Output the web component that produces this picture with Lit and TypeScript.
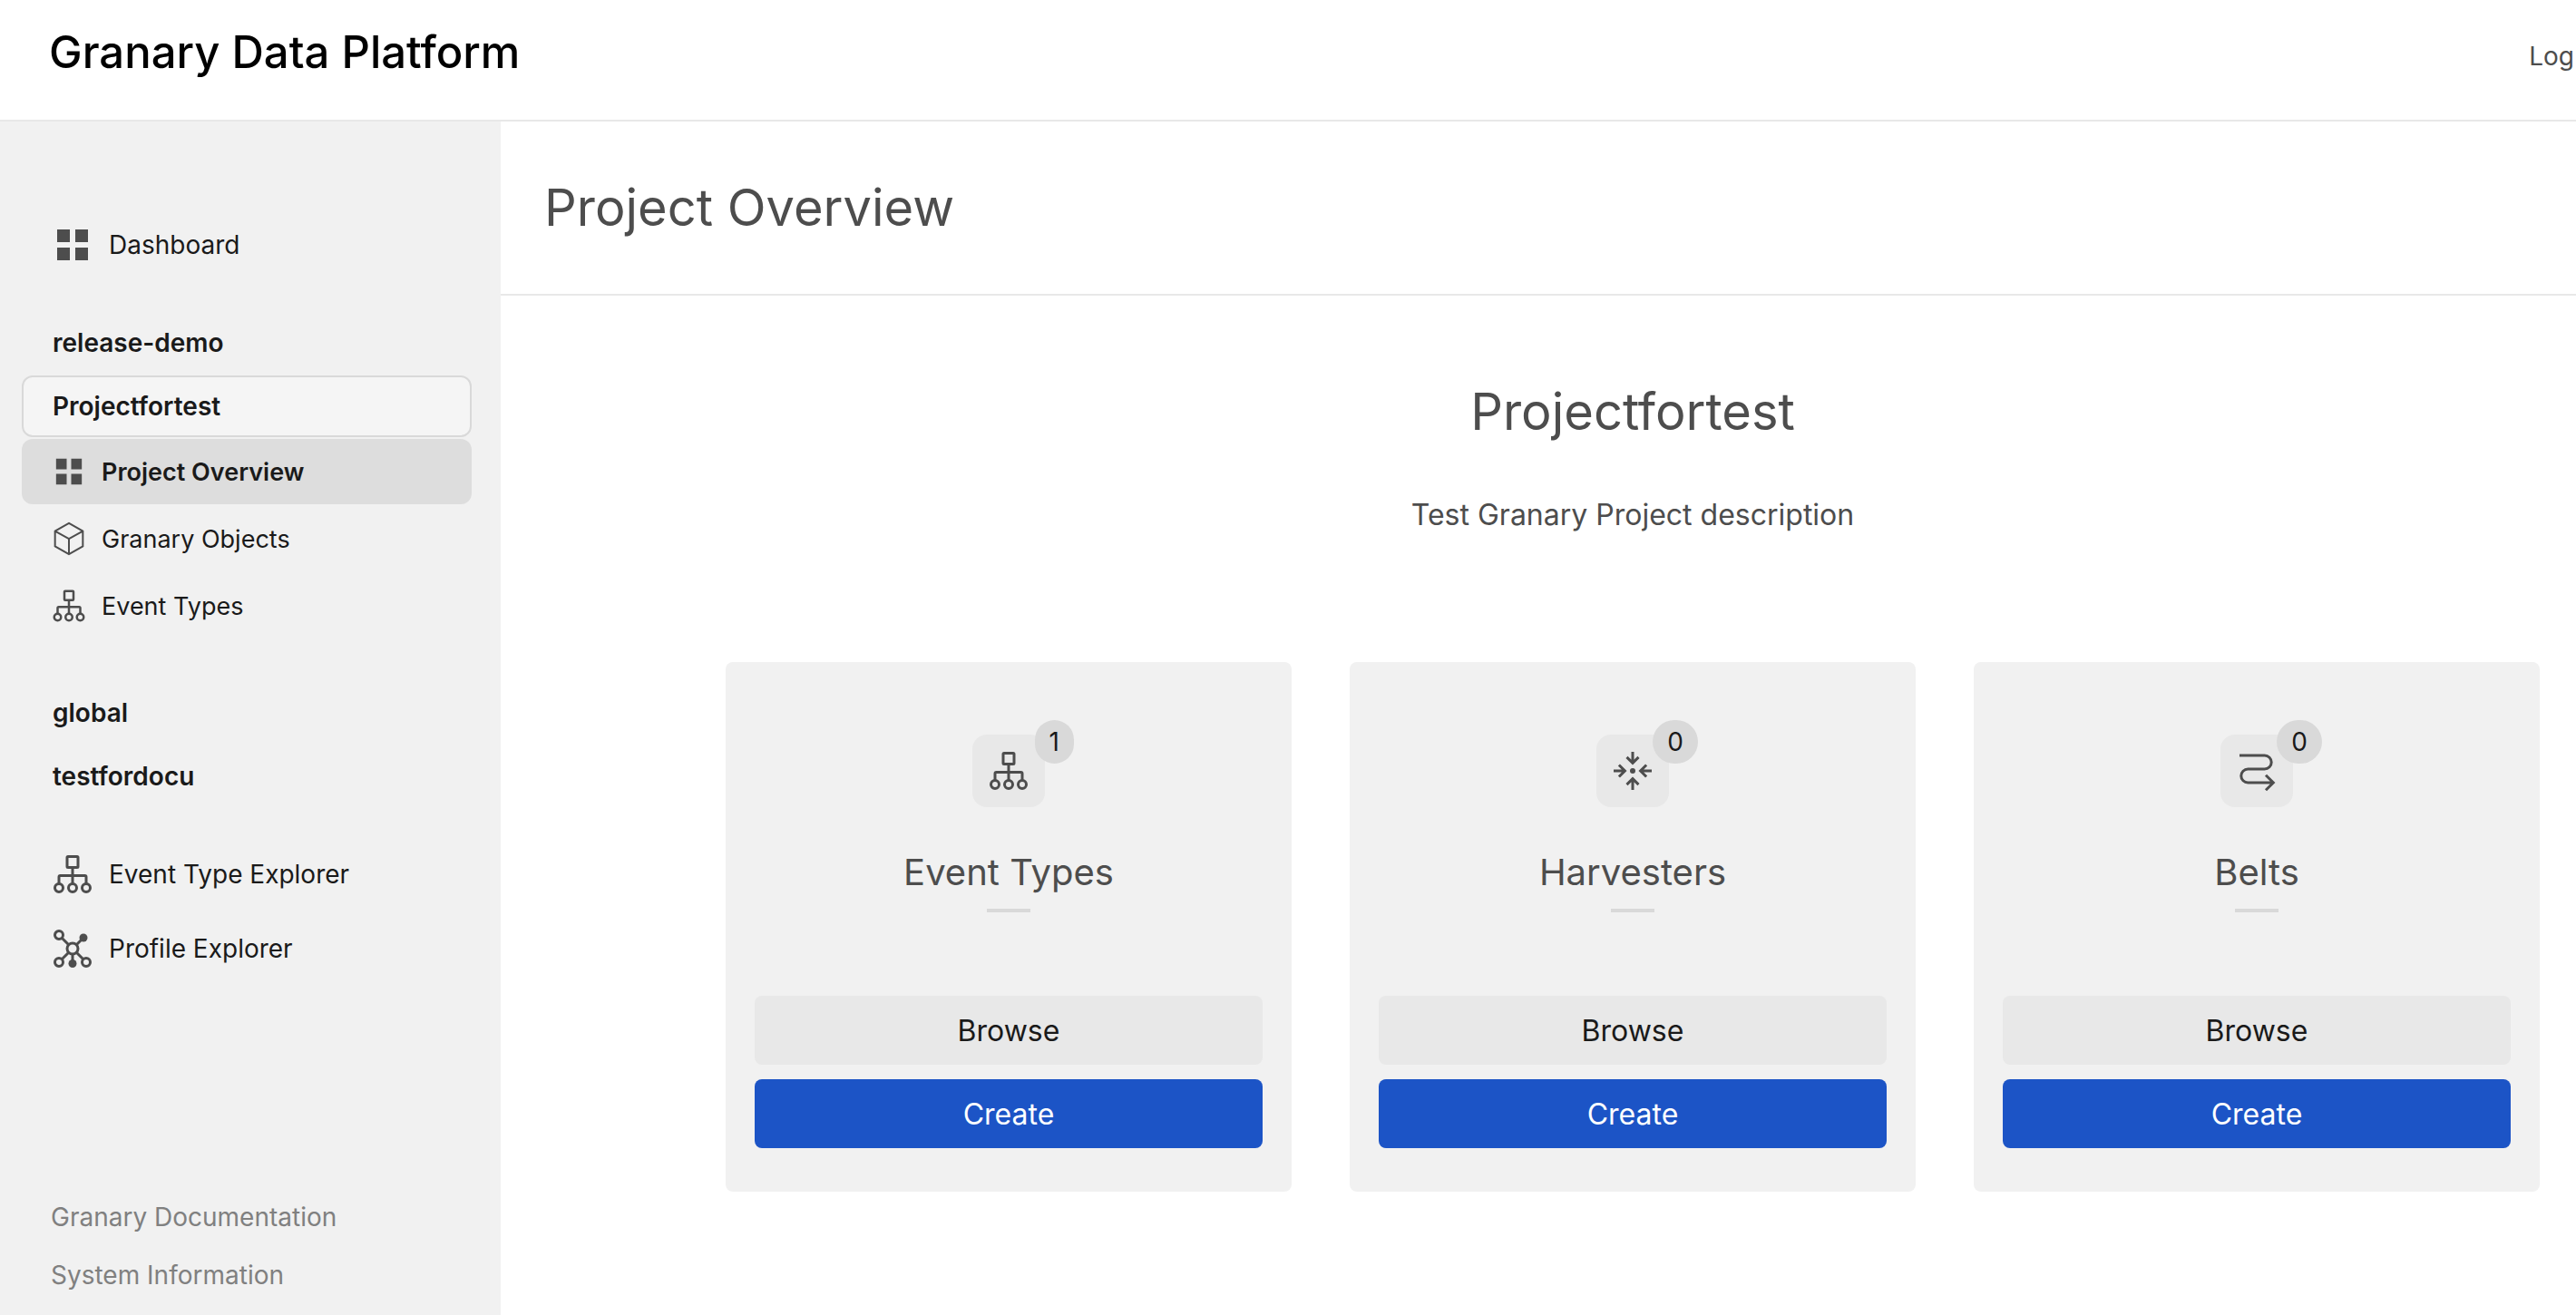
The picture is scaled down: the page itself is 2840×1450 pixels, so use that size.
import { LitElement, html, css, svg } from "lit";
import { customElement, property } from "lit/decorators.js";
import { classMap } from "lit/directives/class-map.js";

type IconName = "grid" | "cube" | "tree" | "graph" | "converge" | "belt";

const shapes = {
  grid: svg`<path class="solid" d="M7 7h14v14H7zM27 7h14v14H27zM7 27h14v14H7zM27 27h14v14H27z"/>`,
  cube: svg`<path class="thin" d="M24 3.4 42.4 14v20L24 44.6 5.6 34V14zM5.6 14 24 24.2 42.4 14M24 24.2V44.6"/>`,
  tree: svg`
    <rect x="18" y="4.5" width="12" height="12" rx="1"/>
    <path d="M24 16.5v18M9 34.5V27a1.5 1.5 0 0 1 1.5-1.5h27A1.5 1.5 0 0 1 39 27v7.5"/>
    <circle cx="9" cy="39" r="4.5"/><circle cx="24" cy="39" r="4.5"/><circle cx="39" cy="39" r="4.5"/>`,
  graph: svg`
    <circle cx="24" cy="24" r="6"/>
    <circle cx="9" cy="9" r="4.5"/><circle cx="9" cy="39" r="4.5"/><circle cx="39" cy="39" r="4.5"/>
    <path d="M12.2 12.2l7.5 7.5M28.3 19.7 36 12M19.7 28.3l-7.5 7.5M28.3 28.3l7.5 7.5M24 30v10"/>
    <circle class="solid" cx="36" cy="12" r="4.5"/><circle class="solid" cx="24" cy="40.5" r="4.5"/>`,
  converge: svg`
    <path d="M24 3v12.4M17.5 8.900l6.500 6.500 6.500-6.500"/>
    <path d="M24 45V32.6M17.5 39.1l6.500-6.500 6.500 6.500"/>
    <path d="M3 24h12.4M8.900 17.5l6.500 6.500-6.500 6.500"/>
    <path d="M45 24H32.6M39.1 17.5l-6.500 6.500 6.500 6.500"/>
    <circle class="solid" cx="24" cy="24" r="3"/>`,
  belt: svg`<path d="M5 7h27.7a7.5 7.5 0 0 1 0 15H14.3a7.5 7.5 0 0 0 0 15H42M34 28.8l8.300 8.200-8.300 8.200"/>`,
};

@customElement("app-icon")
class AppIcon extends LitElement {
  @property() name: IconName = "grid";

  static styles = css`
    :host {
      display: block;
      flex: none;
      width: 48px;
      height: 48px;
      color: #4d4d4d;
    }
    .icon {
      display: block;
      width: 100%;
      height: 100%;
      fill: none;
      stroke: currentColor;
      stroke-width: 3;
    }
    .solid {
      fill: currentColor;
      stroke: none;
    }
    .thin {
      stroke-width: 2.4;
    }
  `;

  render() {
    return html`<svg class="icon" viewBox="0 0 48 48" aria-hidden="true">${shapes[this.name]}</svg>`;
  }
}

@customElement("resource-card")
class ResourceCard extends LitElement {
  @property() label = "";
  @property() icon: IconName = "tree";
  @property({ type: Number }) count = 0;

  static styles = css`
    .card {
      display: flex;
      flex-direction: column;
      align-items: center;
      padding: 80px 32px 48px;
      border-radius: 8px;
      background: #f1f1f1;
    }
    .tile {
      position: relative;
      padding: 16px;
      border-radius: 16px;
      background: #e8e8e8;
    }
    .badge {
      position: absolute;
      top: -16px;
      right: -32px;
      padding: 0 16px;
      border-radius: 24px;
      background: #d9d9d9;
      color: #1a1a1a;
      font-size: 28px;
      line-height: 48px;
    }
    .title {
      margin: 40px 0 0;
      color: #4d4d4d;
      font-size: 40px;
      font-weight: 400;
      line-height: 64px;
    }
    .rule {
      width: 48px;
      height: 4px;
      margin-top: 8px;
      background: #d9d9d9;
    }
    .actions {
      display: flex;
      flex-direction: column;
      gap: 16px;
      width: 100%;
      margin-top: 92px;
    }
    .button {
      height: 76px;
      padding: 0 32px;
      border: 0;
      border-radius: 8px;
      background: #e8e8e8;
      color: #1a1a1a;
      font: inherit;
      font-size: 32px;
      cursor: pointer;
    }
    .primary {
      background: #1c54c6;
      color: #fff;
    }
  `;

  render() {
    return html`
      <article class="card">
        <div class="tile">
          <app-icon name=${this.icon}></app-icon>
          <span class="badge">${this.count}</span>
        </div>
        <h3 class="title">${this.label}</h3>
        <div class="rule"></div>
        <div class="actions">
          <button class="button" type="button">Browse</button>
          <button class="button primary" type="button">Create</button>
        </div>
      </article>
    `;
  }
}

@customElement("app-root")
class AppRoot extends LitElement {
  static styles = css`
    :host {
      display: flex;
      flex-direction: column;
      min-height: 100vh;
      background: #fff;
      color: #1a1a1a;
      font-family: Inter, "Liberation Sans", sans-serif;
      font-size: 28px;
    }
    a {
      color: inherit;
      text-decoration: none;
    }
    .topbar {
      display: flex;
      justify-content: space-between;
      padding: 24px 2px 32px 54px;
      border-bottom: 2px solid #e8e8e8;
    }
    .brand {
      color: #000;
      font-size: 49px;
      font-weight: 500;
      line-height: 68px;
    }
    .logout {
      color: #4d4d4d;
      line-height: 76px;
    }
    .body {
      display: flex;
      flex: 1;
    }
    .sidebar {
      display: flex;
      flex: none;
      flex-direction: column;
      justify-content: space-between;
      box-sizing: border-box;
      width: 552px;
      padding: 96px 32px 12px 24px;
      background: #f1f1f1;
    }
    .nav {
      display: flex;
      flex-direction: column;
      gap: 34px;
    }
    .group {
      display: flex;
      flex-direction: column;
      gap: 2px;
    }
    .link {
      display: flex;
      align-items: center;
      gap: 16px;
      height: 80px;
      padding-left: 32px;
      border-radius: 12px;
    }
    .sub {
      height: 72px;
      font-size: 27px;
    }
    .sub app-icon {
      width: 40px;
      height: 40px;
    }
    .project {
      box-sizing: border-box;
      height: 68px;
      border: 2px solid transparent;
      font-weight: 600;
    }
    .open {
      border-color: #d9d9d9;
      background: #f5f5f5;
    }
    .active {
      background: #ddd;
      font-weight: 600;
    }
    .spaced {
      margin-top: 46px;
    }
    .footer {
      display: flex;
      flex-direction: column;
      padding-left: 32px;
      color: #808080;
      line-height: 64px;
    }
    .main {
      flex: 1;
      min-width: 0;
    }
    .heading {
      margin: 0;
      padding: 55px 48px;
      border-bottom: 2px solid #e8e8e8;
      color: #4d4d4d;
      font-size: 56px;
      font-weight: 400;
      line-height: 80px;
    }
    .content {
      padding: 88px 40px 96px 248px;
      color: #4d4d4d;
      text-align: center;
    }
    .name {
      margin: 0;
      font-size: 56px;
      font-weight: 400;
      line-height: 80px;
    }
    .description {
      margin: 48px 0 0;
      font-size: 32px;
      line-height: 52px;
    }
    .cards {
      display: grid;
      grid-template-columns: repeat(3, minmax(0, 1fr));
      gap: 64px;
      margin-top: 136px;
    }
  `;

  private project(label: string, open = false, spaced = false) {
    return html`<a class=${classMap({ link: true, project: true, open, spaced })} href="#${label}">${label}</a>`;
  }

  private item(label: string, icon: IconName, sub = false, active = false) {
    return html`
      <a class=${classMap({ link: true, sub, active })} href="#">
        <app-icon name=${icon}></app-icon>
        <span>${label}</span>
      </a>
    `;
  }

  render() {
    return html`
      <header class="topbar">
        <a class="brand" href="#">Granary Data Platform</a>
        <a class="logout" href="#">Log</a>
      </header>
      <div class="body">
        <aside class="sidebar">
          <nav class="nav">
            <div class="group">${this.item("Dashboard", "grid")}</div>
            <div class="group">
              ${this.project("release-demo")}
              ${this.project("Projectfortest", true)}
              ${this.item("Project Overview", "grid", true, true)}
              ${this.item("Granary Objects", "cube", true)}
              ${this.item("Event Types", "tree", true)}
              ${this.project("global", false, true)}
              ${this.project("testfordocu")}
            </div>
            <div class="group">
              ${this.item("Event Type Explorer", "tree")}
              ${this.item("Profile Explorer", "graph")}
            </div>
          </nav>
          <div class="footer">
            <a href="#">Granary Documentation</a>
            <a href="#">System Information</a>
          </div>
        </aside>
        <main class="main">
          <h1 class="heading">Project Overview</h1>
          <section class="content">
            <h2 class="name">Projectfortest</h2>
            <p class="description">Test Granary Project description</p>
            <div class="cards">
              <resource-card label="Event Types" icon="tree" count="1"></resource-card>
              <resource-card label="Harvesters" icon="converge" count="0"></resource-card>
              <resource-card label="Belts" icon="belt" count="0"></resource-card>
            </div>
          </section>
        </main>
      </div>
    `;
  }
}
